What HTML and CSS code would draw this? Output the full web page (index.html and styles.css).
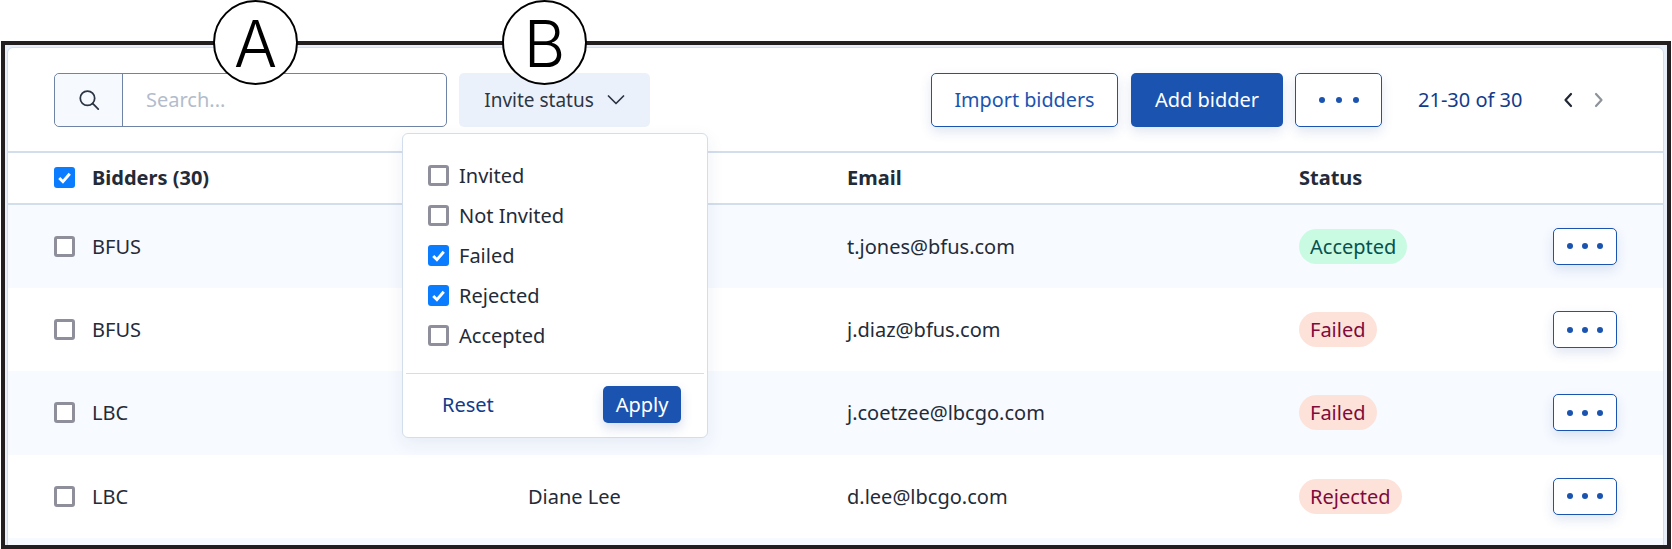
FILE: index.html
```html
<!DOCTYPE html>
<html lang="en">
<head>
<meta charset="utf-8">
<title>Bidders</title>
<link rel="stylesheet" href="styles.css">
</head>
<body>
<div class="callout callout-a">A</div>
<div class="callout callout-b">B</div>
<div class="frame">
  <div class="card">
    <div class="toolbar">
      <div class="search">
        <span class="search-icon">
          <svg width="24" height="24" viewBox="0 0 22 22" fill="none" stroke="#2b3442" stroke-width="1.6" stroke-linecap="round"><circle cx="9.6" cy="9.4" r="6.6"/><path d="M14.5 14.4l5 5"/></svg>
        </span>
        <span class="search-input">Search...</span>
      </div>
      <button class="filter">Invite status
        <svg width="18" height="10" viewBox="0 0 18 10" fill="none" stroke="#2b3442" stroke-width="1.7" stroke-linecap="round" stroke-linejoin="round"><path d="M1.5 1l7.5 7.5L16.500 1"/></svg>
      </button>
      <div class="actions">
        <button class="btn btn-outline btn-import">Import bidders</button>
        <button class="btn btn-solid btn-add">Add bidder</button>
        <button class="btn btn-outline btn-more"><i></i><i></i><i></i></button>
      </div>
      <span class="range">21-30 of 30</span>
      <div class="pager">
        <svg width="10" height="16" viewBox="0 0 10 16" fill="none" stroke="#1f2733" stroke-width="2.200" stroke-linecap="round" stroke-linejoin="round"><path d="M8 2L2.500 8 8 14"/></svg>
        <svg width="10" height="16" viewBox="0 0 10 16" fill="none" stroke="#8e939b" stroke-width="2.200" stroke-linecap="round" stroke-linejoin="round"><path d="M2 2l5.500 6L2 14"/></svg>
      </div>
    </div>

    <div class="row head">
      <span class="check on"><svg viewBox="0 0 20 20"><path d="M5 10.500l3.500 3.500L15 6.500"/></svg></span>
      <span>Bidders (30)</span>
      <span></span>
      <span>Email</span>
      <span>Status</span>
      <span></span>
    </div>

    <div class="row tint">
      <span class="check"></span>
      <span>BFUS</span>
      <span></span>
      <span>t.jones@bfus.com</span>
      <span class="badge ok">Accepted</span>
      <button class="btn btn-outline btn-row"><i></i><i></i><i></i></button>
    </div>
    <div class="row">
      <span class="check"></span>
      <span>BFUS</span>
      <span></span>
      <span>j.diaz@bfus.com</span>
      <span class="badge bad">Failed</span>
      <button class="btn btn-outline btn-row"><i></i><i></i><i></i></button>
    </div>
    <div class="row tint">
      <span class="check"></span>
      <span>LBC</span>
      <span></span>
      <span>j.coetzee@lbcgo.com</span>
      <span class="badge bad">Failed</span>
      <button class="btn btn-outline btn-row"><i></i><i></i><i></i></button>
    </div>
    <div class="row">
      <span class="check"></span>
      <span>LBC</span>
      <span>Diane Lee</span>
      <span>d.lee@lbcgo.com</span>
      <span class="badge bad">Rejected</span>
      <button class="btn btn-outline btn-row"><i></i><i></i><i></i></button>
    </div>
    <div class="row tint"></div>

    <div class="popup">
      <div class="options">
        <label class="option"><span class="check"></span>Invited</label>
        <label class="option"><span class="check"></span>Not Invited</label>
        <label class="option"><span class="check on"><svg viewBox="0 0 20 20"><path d="M5 10.500l3.500 3.500L15 6.500"/></svg></span>Failed</label>
        <label class="option"><span class="check on"><svg viewBox="0 0 20 20"><path d="M5 10.500l3.500 3.500L15 6.500"/></svg></span>Rejected</label>
        <label class="option"><span class="check"></span>Accepted</label>
      </div>
      <div class="popup-foot">
        <span class="reset">Reset</span>
        <button class="btn btn-solid btn-apply">Apply</button>
      </div>
    </div>
  </div>
</div>
</body>
</html>
```

FILE: styles.css
```css
* { box-sizing: border-box; }
html, body { margin: 0; padding: 0; }
body {
  width: 1672px;
  height: 549px;
  overflow: hidden;
  background: #fff;
  font-family: "Noto Sans", "Open Sans", sans-serif;
  font-size: 20px;
  color: #242b38;
  position: relative;
  padding: 41px 1px 0;
}
button { font-family: inherit; font-size: inherit; cursor: pointer; }

.frame {
  height: 508px;
  border: 4.500px solid #231f20;
  background: #e9eff9;
  padding: 2px 3px 0 2px;
  overflow: hidden;
}
.card {
  position: relative;
  height: 600px;
  background: #fff;
  border: 1px solid #d3deec;
  border-radius: 6px 6px 0 0;
}

.callout {
  position: absolute;
  top: 0;
  width: 85px;
  height: 85px;
  border: 2px solid #000;
  border-radius: 50%;
  background: #fff;
  color: #000;
  font-family: Inter, "Liberation Sans", sans-serif;
  font-weight: 300;
  font-size: 64px;
  line-height: 84px;
  text-align: center;
  z-index: 5;
}
.callout-a { left: 213px; }
.callout-b { left: 502px; }

.toolbar {
  display: flex;
  align-items: center;
  height: 105px;
  padding: 0 0 0 46px;
  border-bottom: 2px solid #d3deec;
}
.search {
  display: flex;
  width: 393px;
  height: 54px;
  border: 1px solid #6e83a5;
  border-radius: 5px;
}
.search-icon {
  width: 68px;
  display: flex;
  align-items: center;
  justify-content: center;
  background: #f6f9fe;
  border-right: 1.500px solid #6e83a5;
  border-radius: 5px 0 0 5px;
}
.search-input {
  padding-left: 23px;
  color: #b3bccb;
  line-height: 52px;
}
.filter {
  margin-left: 12px;
  width: 191px;
  height: 54px;
  border: 0;
  border-radius: 5px;
  background: #ebf1fb;
  color: #2d3644;
  font-size: 19px;
  display: flex;
  align-items: center;
  justify-content: center;
  gap: 13px;
}
.actions {
  margin-left: 281px;
  display: flex;
  gap: 13px;
}
.btn {
  height: 54px;
  border-radius: 5px;
  padding: 0;
  box-shadow: 0 5px 12px rgba(40, 80, 160, 0.14);
}
.btn-outline {
  background: #fff;
  border: 1.500px solid #1a54b0;
  color: #1a54b0;
}
.btn-solid {
  background: #1a54b0;
  border: 0;
  color: #fff;
}
.btn-import { width: 187px; font-size: 19.800px; }
.btn-add { width: 152px; }
.btn-more { width: 87px; margin-left: -1px; }
.btn-more, .btn-row {
  display: flex;
  align-items: center;
  justify-content: center;
  gap: 11px;
}
.btn-more i, .btn-row i {
  width: 6px;
  height: 6px;
  border-radius: 50%;
  background: #1a54b0;
}
.range {
  margin-left: 36px;
  color: #123b8c;
}
.pager {
  margin-left: 41px;
  display: flex;
  gap: 21px;
}

.row {
  display: grid;
  grid-template-columns: 38px 436px 319px 452px 1fr auto;
  align-items: center;
  height: 83.400px;
  padding: 0 46px 0 46px;
}
.tint { background: #f7faff; }
.head {
  height: 51.500px;
  font-weight: 700;
  border-bottom: 2px solid #d3deec;
}
.check {
  display: inline-block;
  width: 21px;
  height: 21px;
  border: 3px solid #8f8f9b;
  border-radius: 3px;
  background: #fff;
  flex: none;
}
.check.on {
  background: #0a7cff;
  border: 0;
}
.check svg {
  display: block;
  width: 21px;
  height: 21px;
  fill: none;
  stroke: #fff;
  stroke-width: 2.800;
}
.badge {
  justify-self: start;
  height: 35px;
  line-height: 35px;
  padding: 0 11px 0 11px;
  border-radius: 18px;
}
.ok { background: #c9fbe2; color: #07514f; }
.bad { background: #fde2da; color: #7e0b3a; }
.btn-row {
  width: 64px;
  height: 37px;
  gap: 9px;
  border-width: 1.700px;
}

.popup {
  position: absolute;
  left: 394px;
  top: 85px;
  width: 306px;
  height: 305px;
  background: #fff;
  border: 1.500px solid #d3deec;
  border-radius: 6px;
  box-shadow: 0 6px 18px rgba(40, 70, 130, 0.08);
  display: flex;
  flex-direction: column;
  z-index: 3;
}
.options {
  height: 239px;
  padding: 21px 0 0 25px;
  display: flex;
  flex-direction: column;
}
.option {
  height: 40.200px;
  display: flex;
  align-items: center;
  gap: 10px;
}
.popup-foot {
  margin: 0 3px;
  flex: 1;
  border-top: 1.500px solid #d3deec;
  display: flex;
  align-items: flex-start;
  justify-content: space-between;
  padding: 12px 23px 0 36px;
}
.reset {
  color: #123b8c;
  line-height: 38px;
}
.btn-apply {
  width: 78px;
  height: 37px;
  box-shadow: 0 5px 12px rgba(40, 80, 160, 0.2);
}
```
